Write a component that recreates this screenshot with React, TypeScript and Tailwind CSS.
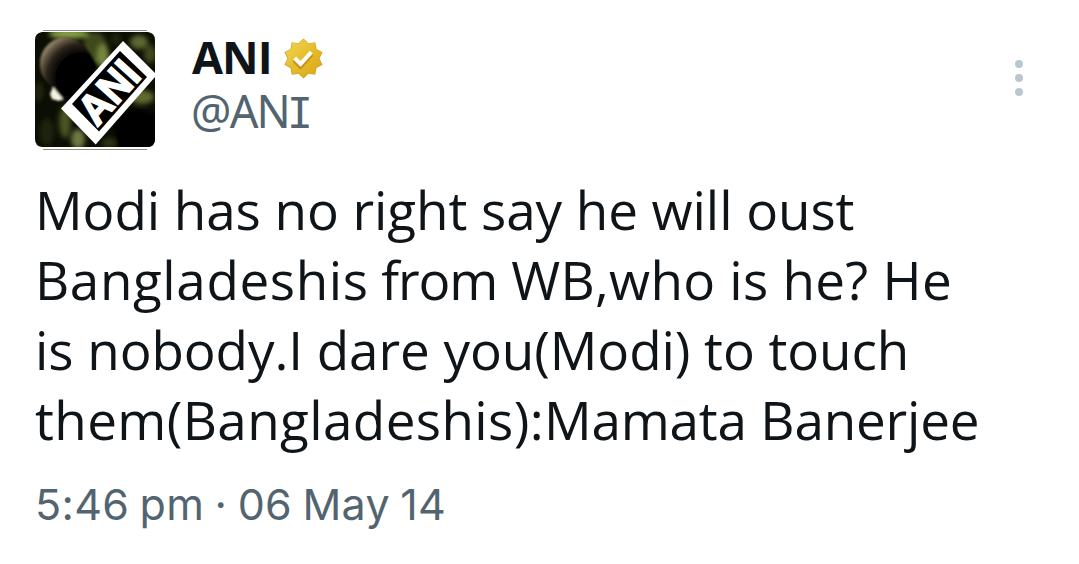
const lines = [
  [{ text: 'Modi has no right say he will oust', spacing: 'tracking-[-0.07px]' }],
  [
    { text: 'Bangladeshis', spacing: 'tracking-[0.6px]' },
    { text: ' from', spacing: 'tracking-[-1.1px]' },
    { text: ' WB,who is he? He', spacing: 'tracking-[0.27px]' },
  ],
  [{ text: 'is nobody.I dare you(Modi) to touch', spacing: 'tracking-[-0.07px]' }],
  [
    { text: 'them(Bangladeshis):', spacing: 'tracking-[0.38px]' },
    { text: 'Mamata Banerjee', spacing: 'tracking-[-0.2px]' },
  ],
];

const badgeShape =
  'M13.324 3.848L11 1.6 8.676 3.848l-3.201-.453-.559 3.184L2.06 8.095 3.48 11l-1.42 2.904 2.856 1.516.559 3.184 3.201-.452L11 20.4l2.324-2.248 3.201.452.559-3.184 2.856-1.516L18.52 11l1.42-2.905-2.856-1.516-.559-3.184z';

const Avatar = () => (
  <svg viewBox="0 0 120 120" className="h-[120px] w-[120px] shrink-0">
    <defs>
      <clipPath id="photo">
        <path d="M7 2H113Q120 3 120 10V109Q120 116 113 117H7Q0 116 0 109V10Q0 3 7 2Z" />
      </clipPath>
      <filter id="soft" x="-50%" y="-50%" width="200%" height="200%">
        <feGaussianBlur stdDeviation="2.5" />
      </filter>
      <filter id="slight">
        <feGaussianBlur stdDeviation="0.8" />
      </filter>
      <radialGradient id="mic" gradientUnits="userSpaceOnUse" cx="46" cy="48" r="45">
        <stop offset="0.55" stopColor="#040302" />
        <stop offset="0.76" stopColor="#2a231b" />
        <stop offset="0.9" stopColor="#62553f" />
        <stop offset="1" stopColor="#8d7d62" />
      </radialGradient>
    </defs>
    <path d="M8 0.5H112M8 119.5H112" stroke="#8f8f88" strokeWidth="1" />
    <g clipPath="url(#photo)">
      <rect width="120" height="120" fill="#0b0e04" />
      <g filter="url(#soft)">
        <ellipse cx="34" cy="4" rx="20" ry="5" fill="#87a045" />
        <ellipse cx="60" cy="18" rx="12" ry="16" fill="#3f4a1b" />
        <ellipse cx="68" cy="26" rx="6" ry="12" fill="#75863f" />
        <ellipse cx="81" cy="9" rx="5" ry="6" fill="#1f260d" />
        <ellipse cx="104" cy="12" rx="9" ry="7" fill="#5c6830" />
        <ellipse cx="115" cy="24" rx="6" ry="9" fill="#414a1f" />
        <ellipse cx="4" cy="62" rx="4" ry="10" fill="#222810" />
        <ellipse cx="30" cy="92" rx="6" ry="16" fill="#4a5421" />
        <ellipse cx="43" cy="109" rx="7" ry="10" fill="#6e7842" />
        <ellipse cx="12" cy="102" rx="7" ry="14" fill="#1a200a" />
        <ellipse cx="107" cy="67" rx="12" ry="7" fill="#606b2e" />
        <ellipse cx="74" cy="113" rx="7" ry="5" fill="#2c3416" />
        <path d="M78 90L98 77L122 84V122H82Z" fill="#020202" />
      </g>
      <g filter="url(#slight)">
        <path
          d="M5 34C5 20 15 8 30 7C42 7 54 18 60 33L63 46L32 76L16 56C8 49 5 42 5 34Z"
          fill="url(#mic)"
        />
        <path d="M18 57L28 69L24 71L17 69L15 64Z" fill="#f4f3e2" />
      </g>
      <path d="M88 11L120 43V47L60.7 114.5L26 78.5Z" fill="#fff" />
      <path d="M85 21L112 47L64 101.5L37 74Z" fill="#000" />
      <text
        transform="translate(62 97.5) rotate(-48)"
        textLength="68"
        lengthAdjust="spacingAndGlyphs"
        fill="#fff"
        stroke="#fff"
        strokeWidth="1.8"
        className="font-['Liberation_Sans',sans-serif] text-[43px] font-bold"
      >
        ANI
      </text>
    </g>
  </svg>
);

const GoldBadge = () => (
  <svg viewBox="0 0 22 22" className="h-[47px] w-[47px]">
    <defs>
      <linearGradient id="gold" x1="0.15" y1="0.1" x2="0.85" y2="0.9">
        <stop offset="0" stopColor="#efd04c" />
        <stop offset="0.5" stopColor="#e5bd2a" />
        <stop offset="1" stopColor="#dcab1c" />
      </linearGradient>
    </defs>
    <path d={badgeShape} fill="#d3a029" />
    <path d={badgeShape} fill="url(#gold)" transform="translate(0.55 0.45) scale(0.95)" />
    <path
      d="M6.233 11.423l3.429 3.428 5.65-6.17.038-.033-.005 1.398-5.683 6.206-3.429-3.429-.003-1.405z"
      fill="#c8901f"
    />
    <path d="M6.234 11.423l3.428 3.428 5.683-6.206-1.347-1.247-4.4 4.795-2.072-2.072z" fill="#fff" />
  </svg>
);

const App = () => {
  return (
    <article className="h-[564px] w-[1079px] overflow-hidden bg-white pt-[30px] pr-14 pl-[35px] font-['Open_Sans',sans-serif] text-[#0f1419]">
      {/* Author */}
      <header className="flex h-[120px] justify-between">
        <div className="flex gap-[37px]">
          <Avatar />
          <div className="flex flex-col">
            <div className="flex h-[56px] items-center gap-2">
              <h1 className="pb-0.5 text-[45px] leading-[54px] font-bold tracking-[-1px]">ANI</h1>
              <GoldBadge />
            </div>
            <p className="-ml-px font-['Noto_Sans',sans-serif] text-[45px] leading-[49px] tracking-[-1.8px] text-[#536471]">
              @AN
              <span className="-ml-0.5 font-['DejaVu_Sans_Mono',monospace] text-[43px] leading-none">I</span>
            </p>
          </div>
        </div>
        <button aria-label="More" className="flex w-2 flex-col items-center gap-1.5 pt-[30px]">
          <span className="h-2 w-2 rounded-full bg-[#b9c8d0]" />
          <span className="h-2 w-2 rounded-full bg-[#b9c8d0]" />
          <span className="h-2 w-2 rounded-full bg-[#b9c8d0]" />
        </button>
      </header>

      {/* Post text */}
      <div className="pt-[25px] text-[53px] leading-[70px] whitespace-pre">
        {lines.map((parts, index) => (
          <p key={index}>
            {parts.map((part) => (
              <span key={part.text} className={part.spacing}>
                {part.text}
              </span>
            ))}
          </p>
        ))}
      </div>

      <time className="mt-6 block font-['Inter',sans-serif] text-[43px] leading-[50px] tracking-[0.3px] text-[#536471] [word-spacing:-2px]">
        5:46 pm · 06 May 14
      </time>
    </article>
  );
};

export default App;
